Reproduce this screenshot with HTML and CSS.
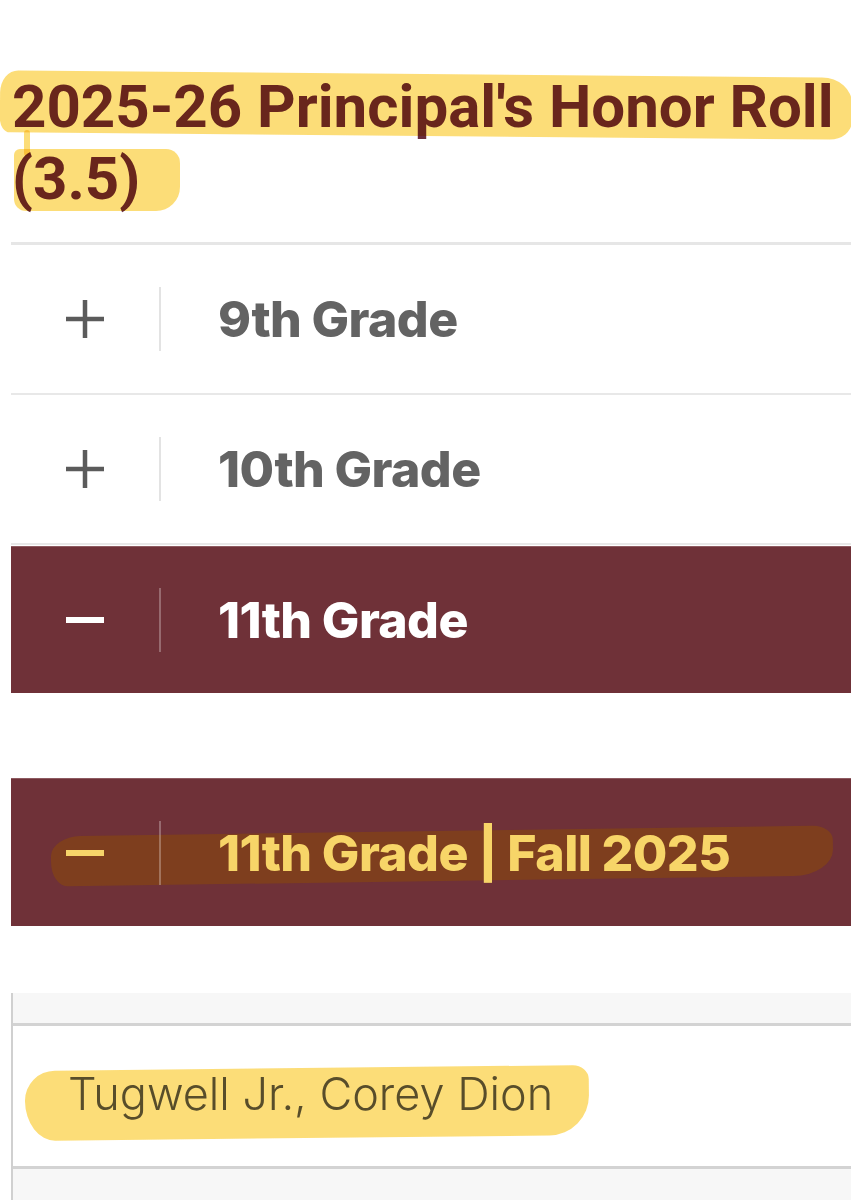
FILE: index.html
```html
<!DOCTYPE html>
<html lang="en">
<head>
<meta charset="utf-8">
<title>2025-26 Principal's Honor Roll</title>
<link rel="stylesheet" href="styles.css">
</head>
<body>
<div class="page">
  <div class="title-wrap">
    <span class="hl hl-title1"></span>
    <span class="hl hl-title2"></span>
    <span class="hl hl-tail"></span>
    <h1 class="title">2025-26 Principal's Honor Roll<br>(3.5)</h1>
  </div>
  <div class="rule"></div>

  <div class="acc acc-light">
    <div class="acc-icon">
      <svg width="40" height="40" viewBox="0 0 40 40"><path d="M20 1v38M1 20h38" stroke="#5b5b5b" stroke-width="4.5" fill="none"/></svg>
    </div>
    <div class="acc-div"></div>
    <div class="acc-label">9th Grade</div>
  </div>

  <div class="acc acc-light">
    <div class="acc-icon">
      <svg width="40" height="40" viewBox="0 0 40 40"><path d="M20 1v38M1 20h38" stroke="#5b5b5b" stroke-width="4.5" fill="none"/></svg>
    </div>
    <div class="acc-div"></div>
    <div class="acc-label">10th Grade</div>
  </div>

  <div class="acc acc-dark">
    <div class="acc-icon">
      <svg width="40" height="8" viewBox="0 0 40 8"><path d="M1 4h38" stroke="#ffffff" stroke-width="6" fill="none"/></svg>
    </div>
    <div class="acc-div"></div>
    <div class="acc-label">11th Grade</div>
  </div>

  <div class="acc acc-dark acc-sub">
    <span class="stroke"></span>
    <div class="acc-icon">
      <svg width="40" height="8" viewBox="0 0 40 8"><path d="M1 4h38" stroke="#f6d46a" stroke-width="6" fill="none"/></svg>
    </div>
    <div class="acc-div"></div>
    <div class="acc-label gold">11th Grade | Fall 2025</div>
  </div>

  <div class="table">
    <div class="t-band"></div>
    <div class="t-row">
      <span class="hl hl-name"></span>
      <span class="name">Tugwell Jr., Corey Dion</span>
    </div>
    <div class="t-band t-band-bottom"></div>
  </div>
</div>
</body>
</html>
```

FILE: styles.css
```css
html, body {
  margin: 0;
  padding: 0;
  background: #ffffff;
}
body {
  width: 851px;
  height: 1200px;
  overflow: hidden;
}
.page {
  padding-left: 11px;
}
.title-wrap {
  position: relative;
  padding-top: 71px;
  margin-left: 1px;
}
.title {
  position: relative;
  margin: 0;
  font-family: Roboto, "Liberation Sans", sans-serif;
  font-weight: 700;
  font-size: 60px;
  line-height: 72px;
  color: #6a2c3b;
  letter-spacing: 0;
}
.hl {
  position: absolute;
  background: #fcd65a;
  opacity: 0.82;
  mix-blend-mode: multiply;
  z-index: 2;
  pointer-events: none;
}
.hl-title1 {
  left: -12px;
  top: 74px;
  width: 852px;
  height: 62px;
  border-radius: 18px 30px 22px 10px / 22px 26px 18px 14px;
  transform: rotate(0.5deg);
}
.hl-title2 {
  left: 2px;
  top: 149px;
  width: 166px;
  height: 62px;
  border-radius: 6px 14px 24px 12px;
}
.hl-tail {
  left: 12px;
  top: 130px;
  width: 6px;
  height: 26px;
  border-radius: 3px;
}
.rule {
  margin-top: 27px;
  height: 3px;
  background: #e6e6e6;
}
.acc {
  position: relative;
  display: flex;
  align-items: center;
  height: 148px;
}
.acc-light {
  border-bottom: 2px solid #e8e8e8;
}
.acc-dark {
  background: #6f3138;
  height: 146px;
  margin-top: 1px;
  border-top: 1px solid #8d5a60;
}
.acc-sub {
  margin-top: 85px;
  height: 147px;
}
.acc-icon {
  width: 148px;
  display: flex;
  justify-content: center;
  align-items: center;
  position: relative;
  z-index: 1;
}
.acc-icon svg {
  display: block;
}
.acc-div {
  width: 2px;
  height: 64px;
  background: #e3e3e3;
  position: relative;
  z-index: 1;
}
.acc-dark .acc-div {
  background: rgba(255, 255, 255, 0.28);
}
.acc-label {
  margin-left: 57px;
  font-family: Inter, "Noto Sans", sans-serif;
  font-weight: 800;
  font-size: 50px;
  letter-spacing: -0.6px;
  color: #636363;
  position: relative;
  z-index: 1;
}
.acc-dark .acc-label {
  color: #ffffff;
}
.acc-dark .acc-label.gold {
  color: #f7d568;
}
.stroke {
  position: absolute;
  left: 40px;
  top: 52px;
  width: 782px;
  height: 50px;
  background: #80401c;
  opacity: 0.9;
  border-radius: 30px 20px 40px 16px / 20px 14px 26px 24px;
  transform: rotate(-0.8deg);
}
.table {
  margin-top: 67px;
  border-left: 2px solid #d0d0d0;
}
.t-band {
  height: 30px;
  background: #f7f7f7;
  border-bottom: 3px solid #d3d3d3;
}
.t-band-bottom {
  border-bottom: none;
  border-top: 3px solid #d3d3d3;
  height: 40px;
}
.t-row {
  position: relative;
  height: 140px;
  display: flex;
  align-items: center;
  padding-left: 55px;
  background: #ffffff;
}
.name {
  position: relative;
  font-family: Inter, "Noto Sans", sans-serif;
  font-weight: 300;
  font-size: 45px;
  color: #595959;
  margin-top: -6px;
}
.hl-name {
  left: 12px;
  top: 42px;
  width: 564px;
  height: 70px;
  border-radius: 30px 16px 40px 30px / 30px 14px 40px 40px;
  transform: rotate(-0.6deg);
}
```
